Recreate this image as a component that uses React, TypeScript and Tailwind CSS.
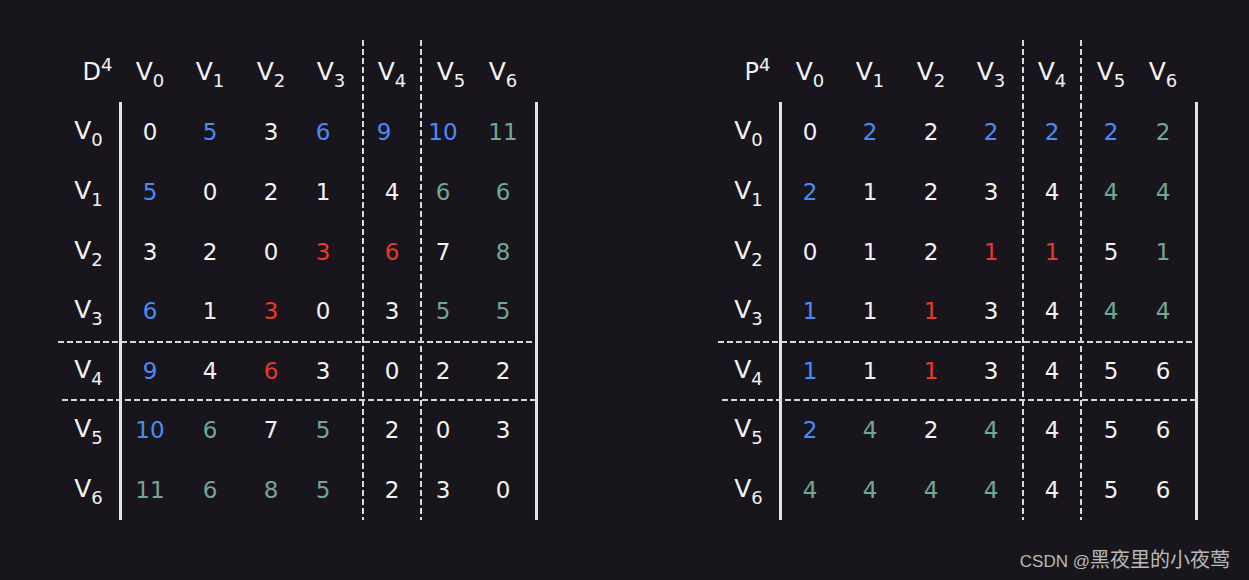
import React from "react";

const COLOR: Record<string, string> = {
  w: "text-[#f2f2f2]",
  b: "text-[#4a8cf7]",
  t: "text-[#72a695]",
  r: "text-[#e8392b]",
};

const ROWS = ["row-start-2", "row-start-3", "row-start-4", "row-start-5", "row-start-7", "row-start-9", "row-start-10"];
const COLS = ["col-start-3", "col-start-4", "col-start-5", "col-start-6", "col-start-8", "col-start-10", "col-start-11"];
const HEADER_PAD = ["", "", "", "", "", "", "pr-[9px]"];

const DASH_V =
  "bg-[repeating-linear-gradient(to_bottom,#d8d8d8_0px,#d8d8d8_6px,transparent_6px,transparent_9px)]";
const DASH_H =
  "bg-[repeating-linear-gradient(to_right,#d8d8d8_0px,#d8d8d8_6px,transparent_6px,transparent_9px)]";

const D_ROWS = [
  "0w 5b 3w 6b 9b 10b 11t",
  "5b 0w 2w 1w 4w 6t 6t",
  "3w 2w 0w 3r 6r 7w 8t",
  "6b 1w 3r 0w 3w 5t 5t",
  "9b 4w 6r 3w 0w 2w 2w",
  "10b 6t 7w 5t 2w 0w 3w",
  "11t 6t 8t 5t 2w 3w 0w",
];

const P_ROWS = [
  "0w 2b 2w 2b 2b 2b 2t",
  "2b 1w 2w 3w 4w 4t 4t",
  "0w 1w 2w 1r 1r 5w 1t",
  "1b 1w 1r 3w 4w 4t 4t",
  "1b 1w 1r 3w 4w 5w 6w",
  "2b 4t 2w 4t 4w 5w 6w",
  "4t 4t 4t 4t 4w 5w 6w",
];

function VLabel({ i }: { i: number }) {
  return (
    <span className="text-[25px] leading-none text-[#f2f2f2]">
      V<span className="relative top-[7px] text-[18px]">{i}</span>
    </span>
  );
}

function Matrix({
  letter,
  rows,
  shift,
}: {
  letter: string;
  rows: string[];
  shift: (r: number, c: number) => string;
}) {
  return (
    <div className="grid grid-cols-[61px_3px_56px_64px_58px_62px_2px_56px_2px_58px_55px_3px] grid-rows-[62px_60px_60px_60px_59px_2px_56px_2px_59px_60px]">
      <div className="col-start-1 row-start-1 flex items-center justify-center pl-[18px] pt-[2px]">
        <span className="text-[24px] leading-none text-[#f2f2f2]">
          {letter}
          <span className="relative -top-[9px] text-[18px]">4</span>
        </span>
      </div>

      {COLS.map((c, i) => (
        <div key={"h" + i} className={`${c} row-start-1 flex items-center justify-center ${HEADER_PAD[i]}`}>
          <VLabel i={i} />
        </div>
      ))}

      {ROWS.map((r, i) => (
        <div key={"l" + i} className={`col-start-1 ${r} flex items-center justify-center pb-[4px]`}>
          <VLabel i={i} />
        </div>
      ))}

      <div className="col-start-2 row-start-2 row-end-11 bg-[#e4e4e4]" />
      <div className="col-start-12 row-start-2 row-end-11 bg-[#e4e4e4]" />
      <div className={`col-start-7 row-start-1 row-end-11 ${DASH_V}`} />
      <div className={`col-start-9 row-start-1 row-end-11 ${DASH_V}`} />
      <div className={`col-start-1 col-end-12 row-start-6 ${DASH_H}`} />
      <div className={`col-start-1 col-end-12 row-start-8 ml-[4px] ${DASH_H}`} />

      {rows.map((line, ri) =>
        line.split(" ").map((tok, ci) => {
          const v = tok.slice(0, -1);
          const col = COLOR[tok.slice(-1)];
          return (
            <div
              key={ri + "-" + ci}
              className={`${ROWS[ri]} ${COLS[ci]} flex items-center justify-center text-[23px] leading-none ${col} ${
                ci === 6 ? "pr-[9px]" : ""
              } ${shift(ri, ci)}`}
            >
              {v}
            </div>
          );
        })
      )}
    </div>
  );
}

export default function App() {
  return (
    <div className="w-[1249px] h-[580px] overflow-hidden bg-[#18161c] flex flex-col font-['DejaVu_Sans',sans-serif]">
      <div className="flex pt-[40px] pl-[58px] gap-[180px]">
        <Matrix
          letter="D"
          rows={D_ROWS}
          shift={(r, c) => (c === 3 || c === 5 || (r === 0 && c === 4) ? "pr-[16px]" : "")}
        />
        <Matrix letter="P" rows={P_ROWS} shift={() => ""} />
      </div>
      <div className="flex justify-end pr-[19px] mt-[28px]">
        <span className="text-[20px] leading-[24px] text-[#b9b9b9] font-['Liberation_Sans','Noto_Sans_CJK_SC',sans-serif]">
          <span className="text-[17px]">CSDN @</span>
          <span>黑夜里的小夜莺</span>
        </span>
      </div>
    </div>
  );
}
